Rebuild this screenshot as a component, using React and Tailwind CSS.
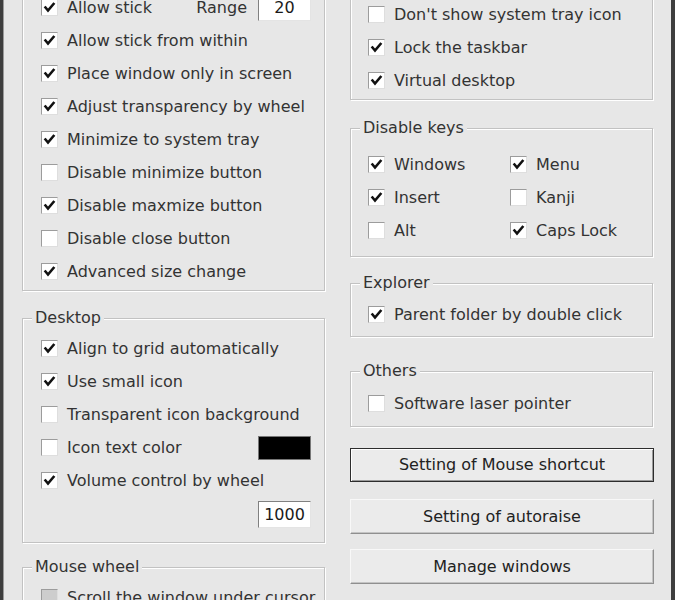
import React from 'react';

const CheckBox = ({ checked, disabled }) => (
  <span
    className={`flex h-[17px] w-[17px] shrink-0 items-center justify-center border border-t-[#9c9c9c] border-l-[#9c9c9c] border-r-[#dedede] border-b-[#dedede] ${
      disabled ? 'bg-[#cdcdcd]' : 'bg-white'
    }`}
  >
    {checked && (
      <svg width="13" height="13" viewBox="0 0 13 13">
        <path d="M2.5 6.5 L5 9.5 L10.5 3" fill="none" stroke="#111" strokeWidth="2.6" strokeLinecap="square" />
      </svg>
    )}
  </span>
);

const Option = ({ checked, disabled, label, children }) => (
  <div className="flex h-[33px] items-center">
    <CheckBox checked={checked} disabled={disabled} />
    <span className="ml-[9px] whitespace-nowrap">{label}</span>
    {children}
  </div>
);

const NumberBox = ({ value }) => (
  <div className="flex h-[27px] w-[53px] items-center justify-center border border-t-[#808080] border-l-[#808080] border-r-[#e4e4e4] border-b-[#e4e4e4] bg-white text-[#1a1a1a]">
    {value}
  </div>
);

const Group = ({ title, className = '', children }) => (
  <fieldset
    className={`border border-[#c2c2c2] px-0 shadow-[inset_1px_1px_0_#fff,1px_1px_0_#fff] ${className}`}
  >
    <legend className="ml-[9px] bg-[#e7e7e7] px-[3px] leading-[20px]">{title}</legend>
    {children}
  </fieldset>
);

const Button = ({ label, isDefault, className = '' }) => (
  <button
    type="button"
    className={`w-[304px] bg-[#ebebeb] text-[#222] ${
      isDefault
        ? 'border border-[#2d2d2d] shadow-[inset_1px_1px_0_#fff,inset_-1px_-1px_0_#9a9a9a]'
        : 'border border-t-[#f8f8f8] border-l-[#f8f8f8] border-r-[#8f8f8f] border-b-[#8f8f8f] shadow-[inset_-1px_-1px_0_#c4c4c4]'
    } ${className}`}
  >
    {label}
  </button>
);

export default function App() {
  return (
    <div className="flex h-[600px] w-[675px] overflow-hidden border-l-[3px] border-r-[4px] border-l-[#3e3e3e] border-r-[#3e3e3e] bg-[#e7e7e7] pl-[19px] font-['DejaVu_Sans',sans-serif] text-[16px] leading-[20px] text-[#333] shadow-[inset_1px_0_0_#9a9a9a]">
      {/* left column */}
      <div className="flex w-[303px] shrink-0 flex-col">
        <div className="-mt-[29px] border border-[#c2c2c2] pb-[2px] pl-[18px] pr-[13px] pt-[19px] shadow-[inset_1px_1px_0_#fff,1px_1px_0_#fff]">
          <Option checked label="Allow stick">
            <span className="ml-auto mr-[11px]">Range</span>
            <NumberBox value="20" />
          </Option>
          <Option checked label="Allow stick from within" />
          <Option checked label="Place window only in screen" />
          <Option checked label="Adjust transparency by wheel" />
          <Option checked label="Minimize to system tray" />
          <Option label="Disable minimize button" />
          <Option checked label="Disable maxmize button" />
          <Option label="Disable close button" />
          <Option checked label="Advanced size change" />
        </div>

        <Group title="Desktop" className="mt-[17px]">
          <div className="pb-[14px] pl-[18px] pr-[13px] pt-[4px]">
            <Option checked label="Align to grid automatically" />
            <Option checked label="Use small icon" />
            <Option label="Transparent icon background" />
            <Option label="Icon text color">
              <span className="ml-auto h-[24px] w-[53px] border border-[#777] bg-black" />
            </Option>
            <Option checked label="Volume control by wheel" />
            <div className="mt-[4px] flex justify-end">
              <NumberBox value="1000" />
            </div>
          </div>
        </Group>

        <Group title="Mouse wheel" className="mt-[14px]">
          <div className="pl-[18px] pt-[4px]">
            <Option disabled label="Scroll the window under cursor" />
          </div>
        </Group>
      </div>

      {/* right column */}
      <div className="ml-[25px] flex w-[304px] shrink-0 flex-col">
        <div className="-mt-[22px] mr-[1px] border border-[#c2c2c2] pb-[2px] pl-[17px] pt-[19px] shadow-[inset_1px_1px_0_#fff,1px_1px_0_#fff]">
          <Option label="Don't show system tray icon" />
          <Option checked label="Lock the taskbar" />
          <Option checked label="Virtual desktop" />
        </div>

        <Group title="Disable keys" className="mr-[1px] mt-[18px]">
          <div className="grid grid-cols-[142px_1fr] pb-[9px] pl-[17px] pt-[10px]">
            <Option checked label="Windows" />
            <Option checked label="Menu" />
            <Option checked label="Insert" />
            <Option label="Kanji" />
            <Option label="Alt" />
            <Option checked label="Caps Lock" />
          </div>
        </Group>

        <Group title="Explorer" className="mr-[1px] mt-[16px]">
          <div className="pb-[5px] pl-[17px] pt-[5px]">
            <Option checked label="Parent folder by double click" />
          </div>
        </Group>

        <Group title="Others" className="mr-[1px] mt-[24px]">
          <div className="pb-[6px] pl-[17px] pt-[6px]">
            <Option label="Software laser pointer" />
          </div>
        </Group>

        <Button isDefault label="Setting of Mouse shortcut" className="mt-[21px] h-[34px]" />
        <Button label="Setting of autoraise" className="mt-[17px] h-[35px]" />
        <Button label="Manage windows" className="mt-[15px] h-[35px]" />
      </div>
    </div>
  );
}
